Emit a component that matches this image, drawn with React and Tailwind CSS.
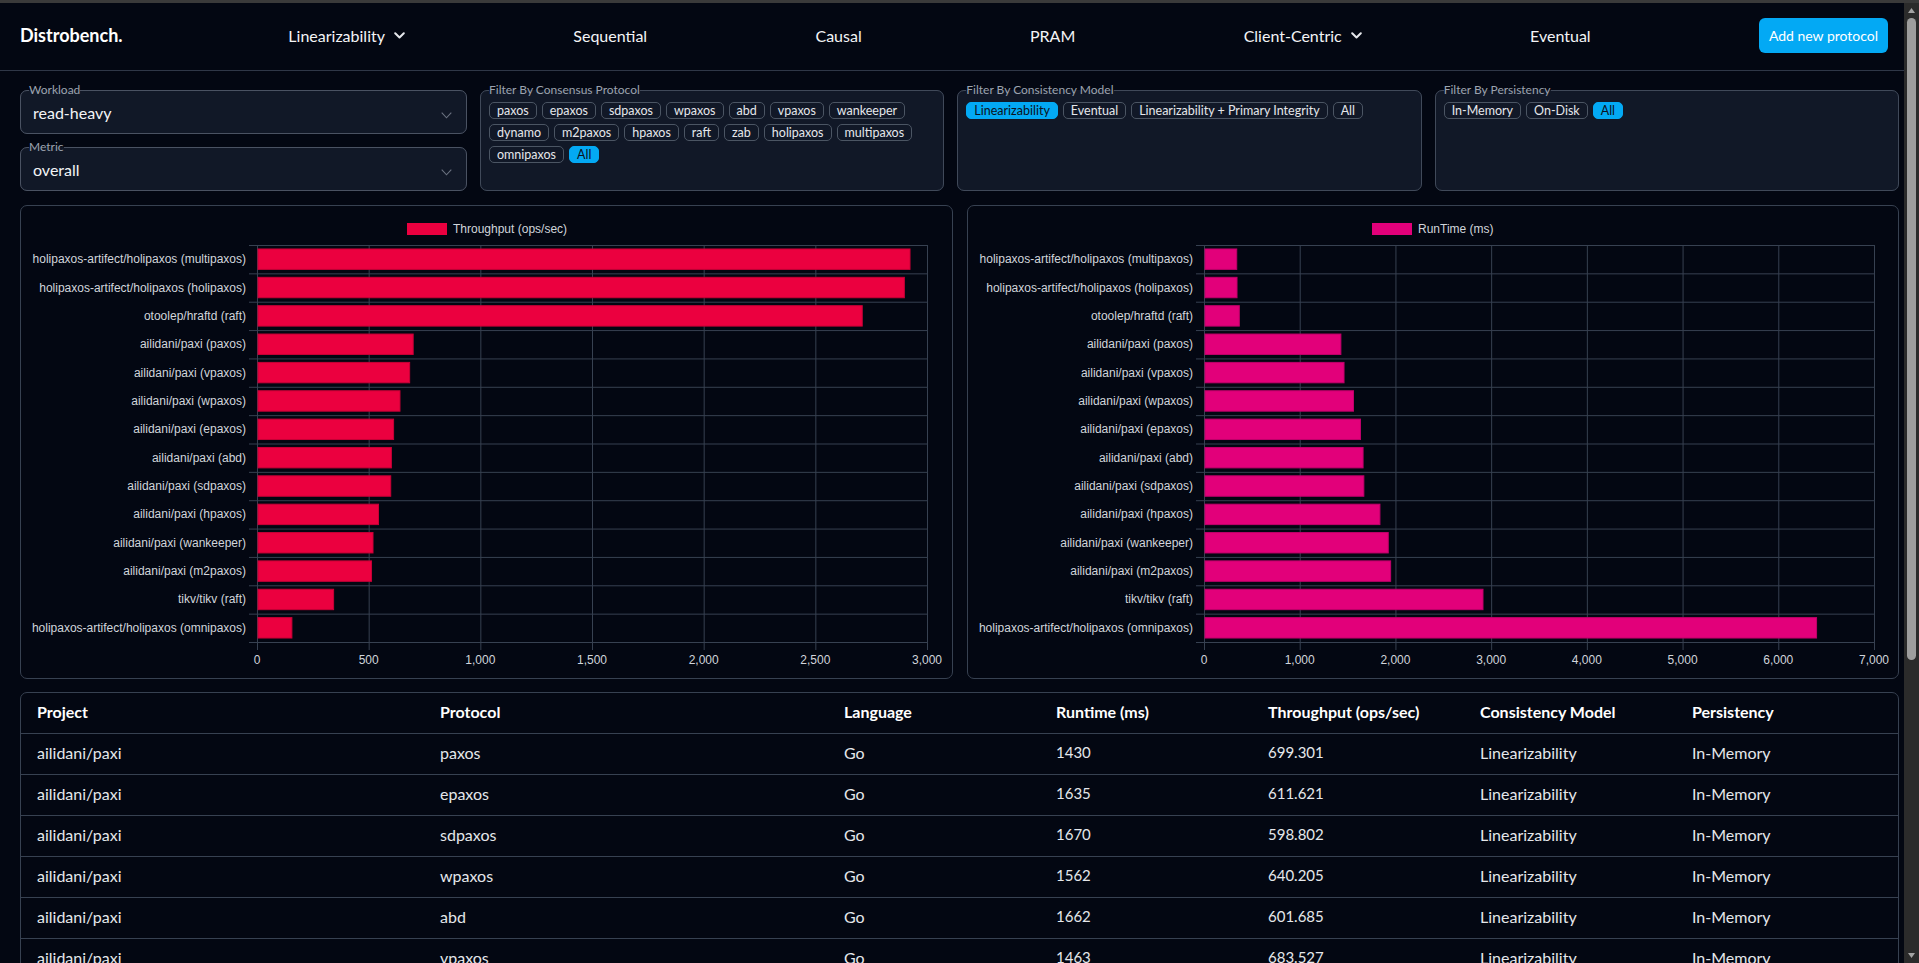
import React from "react";

const FONT = { fontFamily: "Lato, 'Open Sans', sans-serif" };

const rows = [
  ["holipaxos-artifect/holipaxos (multipaxos)", 342],
  ["holipaxos-artifect/holipaxos (holipaxos)", 345],
  ["otoolep/hraftd (raft)", 369],
  ["ailidani/paxi (paxos)", 1430],
  ["ailidani/paxi (vpaxos)", 1463],
  ["ailidani/paxi (wpaxos)", 1562],
  ["ailidani/paxi (epaxos)", 1635],
  ["ailidani/paxi (abd)", 1662],
  ["ailidani/paxi (sdpaxos)", 1670],
  ["ailidani/paxi (hpaxos)", 1838],
  ["ailidani/paxi (wankeeper)", 1925],
  ["ailidani/paxi (m2paxos)", 1950],
  ["tikv/tikv (raft)", 2915],
  ["holipaxos-artifect/holipaxos (omnipaxos)", 6400],
];

const tableRows = [
  ["ailidani/paxi", "paxos", "Go", 1430, "699.301", "Linearizability", "In-Memory"],
  ["ailidani/paxi", "epaxos", "Go", 1635, "611.621", "Linearizability", "In-Memory"],
  ["ailidani/paxi", "sdpaxos", "Go", 1670, "598.802", "Linearizability", "In-Memory"],
  ["ailidani/paxi", "wpaxos", "Go", 1562, "640.205", "Linearizability", "In-Memory"],
  ["ailidani/paxi", "abd", "Go", 1662, "601.685", "Linearizability", "In-Memory"],
  ["ailidani/paxi", "vpaxos", "Go", 1463, "683.527", "Linearizability", "In-Memory"],
  ["ailidani/paxi", "hpaxos", "Go", 1838, "544.070", "Linearizability", "In-Memory"],
  ["ailidani/paxi", "wankeeper", "Go", 1925, "519.481", "Linearizability", "In-Memory"],
  ["ailidani/paxi", "m2paxos", "Go", 1950, "512.821", "Linearizability", "In-Memory"],
  ["otoolep/hraftd", "raft", "Go", 369, "2710.027", "Linearizability", "On-Disk"],
  ["tikv/tikv", "raft", "Rust", 2915, "343.053", "Linearizability", "On-Disk"],
];

function NavChevron() {
  return (
    <svg width="11" height="7" viewBox="0 0 11 7" className="ml-[9px]">
      <polyline points="1.2,1.2 5.5,5.5 9.8,1.2" fill="none" stroke="#e5e7eb" strokeWidth="2" strokeLinecap="round" strokeLinejoin="round" />
    </svg>
  );
}

function SelectBox({ label, value }) {
  return (
    <fieldset className="min-w-0 rounded-[7px] border border-[#4a5262] bg-[#111827] px-[8px]">
      <legend className="text-[12px] leading-[14px] text-[#9ca3af]">{label}</legend>
      <div className="flex h-[36px] items-center justify-between pb-[4px] pl-[4px] pr-[6px]">
        <span className="text-[16px] text-[#f3f4f6]">{value}</span>
        <svg width="11" height="7" viewBox="0 0 11 7" className="mt-[4px]">
          <polyline points="0.7,0.7 5.5,5.8 10.3,0.7" fill="none" stroke="#6b7280" strokeWidth="1.1" />
        </svg>
      </div>
    </fieldset>
  );
}

function Chip({ children, active }) {
  return (
    <span
      className={
        active
          ? "flex h-[17px] items-center rounded-[5px] border border-[#03a9f4] bg-[#03a9f4] px-[7px] text-[12.5px] leading-[15px] text-[#0b1220]"
          : "flex h-[17px] items-center rounded-[5px] border border-[#4b5563] px-[7px] text-[12.5px] leading-[15px] text-[#e5e7eb]"
      }
    >
      {children}
    </span>
  );
}

function FilterBox({ label, items, active }) {
  return (
    <fieldset className="min-w-0 rounded-[7px] border border-[#404959] bg-[#111827] px-[8px]">
      <legend className="text-[12px] leading-[14px] text-[#9ca3af]">{label}</legend>
      <div className="flex flex-wrap gap-x-[5px] gap-y-[5px] pt-[5px]">
        {items.map((it) => (
          <Chip key={it} active={it === active}>
            {it}
          </Chip>
        ))}
      </div>
    </fieldset>
  );
}

function BarChart({ values, max, step, color, stroke, legend, legendX, legendTextX }) {
  const W = 930;
  const H = 472;
  const x0 = 236;
  const x1 = 906;
  const top = 39;
  const bottom = 436;
  const rowH = (bottom - top) / values.length;
  const sx = (v) => x0 + (v / max) * (x1 - x0);
  const ticks = [];
  for (let v = 0; v <= max; v += step) ticks.push(v);
  const fontFamily = "'Liberation Sans', Arial, Helvetica, sans-serif";
  return (
    <svg width={W} height={H} className="block">
      <rect x={legendX} y={17} width={40} height={12} fill={color} />
      <text x={legendTextX} y={27} fontSize="12" fill="#d1d5db" fontFamily={fontFamily}>
        {legend}
      </text>
      {ticks.map((t) => (
        <line key={"v" + t} x1={sx(t) + 0.5} x2={sx(t) + 0.5} y1={top} y2={bottom + 8} stroke="#374151" strokeWidth="1" />
      ))}
      {values.map((_, i) => (
        <line key={"h" + i} x1={x0 - 8} x2={x1 + 0.5} y1={top + i * rowH + 0.5} y2={top + i * rowH + 0.5} stroke="#374151" strokeWidth="1" />
      ))}
      <line x1={x0 - 8} x2={x1 + 0.5} y1={bottom + 0.5} y2={bottom + 0.5} stroke="#374151" strokeWidth="1" />
      {values.map(([label, v], i) => {
        const bh = rowH * 0.72;
        const y = top + i * rowH + (rowH - bh) / 2;
        return (
          <g key={label}>
            <rect x={x0 + 1} y={y} width={sx(v) - x0 - 1} height={bh} fill={color} stroke={stroke} strokeWidth="1" />
            <text
              x={x0 - 11}
              y={top + i * rowH + rowH / 2 + 4}
              fontSize="12"
              textAnchor="end"
              fill="#d1d5db"
              fontFamily={fontFamily}
            >
              {label}
            </text>
          </g>
        );
      })}
      {ticks.map((t) => (
        <text key={"t" + t} x={sx(t)} y={458} fontSize="12" textAnchor="middle" fill="#d1d5db" fontFamily={fontFamily}>
          {t.toLocaleString("en-US")}
        </text>
      ))}
    </svg>
  );
}

function FakeScrollbar() {
  return (
    <div className="flex h-full w-[15px] shrink-0 flex-col items-center bg-[#2b2b2b]">
      <svg width="15" height="15" viewBox="0 0 15 15" className="shrink-0">
        <polygon points="7.5,5 11,10 4,10" fill="#a3a3a3" />
      </svg>
      <div className="h-[642px] w-[9px] shrink-0 rounded-full bg-[#9e9e9e]" />
      <div className="flex-1" />
      <svg width="15" height="15" viewBox="0 0 15 15" className="shrink-0">
        <polygon points="7.5,10 11,5 4,5" fill="#a3a3a3" />
      </svg>
    </div>
  );
}

export default function App() {
  const throughput = rows.map(([l, r]) => [l, 1000000 / r]);
  return (
    <div className="h-[963px] overflow-hidden bg-[#030712] text-[#e5e7eb]" style={FONT}>
      <div className="h-[3px] bg-[#3a3a3a]" />
      <div className="flex h-[960px]">
        <div className="h-full min-w-0 flex-1 overflow-hidden bg-[#030712]">
          <nav className="flex h-[68px] items-center border-b border-[#2f3747] pb-[2px] pl-5 pr-4">
            <div className="w-[100px] text-[18px] font-bold text-white">Distrobench.</div>
            <div className="flex flex-1 items-center justify-evenly text-[16px] text-[#f3f4f6]">
              <span className="flex items-center">
                Linearizability
                <NavChevron />
              </span>
              <span>Sequential</span>
              <span>Causal</span>
              <span>PRAM</span>
              <span className="flex items-center">
                Client-Centric
                <NavChevron />
              </span>
              <span>Eventual</span>
            </div>
            <button className="flex h-[35px] w-[129px] items-center justify-center rounded-[6px] bg-[#03a9f4] text-[14px] text-white">
              Add new protocol
            </button>
          </nav>

          <main className="pl-5 pr-[5px] pt-[12px]">
            <div className="grid grid-cols-[447px_1fr_1fr_1fr] gap-x-[13px]">
              <div className="flex flex-col gap-[6px]">
                <SelectBox label="Workload" value="read-heavy" />
                <SelectBox label="Metric" value="overall" />
              </div>
              <FilterBox
                label="Filter By Consensus Protocol"
                items={["paxos", "epaxos", "sdpaxos", "wpaxos", "abd", "vpaxos", "wankeeper", "dynamo", "m2paxos", "hpaxos", "raft", "zab", "holipaxos", "multipaxos", "omnipaxos", "All"]}
                active="All"
              />
              <FilterBox
                label="Filter By Consistency Model"
                items={["Linearizability", "Eventual", "Linearizability + Primary Integrity", "All"]}
                active="Linearizability"
              />
              <FilterBox label="Filter By Persistency" items={["In-Memory", "On-Disk", "All"]} active="All" />
            </div>

            <div className="mt-[14px] grid grid-cols-2 gap-[14px]">
              <div className="h-[474px] overflow-hidden rounded-[7px] border border-[#374151]">
                <BarChart
                  values={throughput}
                  max={3000}
                  step={500}
                  color="#eb003f"
                  stroke="#c80036"
                  legend="Throughput (ops/sec)"
                  legendX={386}
                  legendTextX={432}
                />
              </div>
              <div className="h-[474px] overflow-hidden rounded-[7px] border border-[#374151]">
                <BarChart
                  values={rows}
                  max={7000}
                  step={1000}
                  color="#e2007a"
                  stroke="#c0006a"
                  legend="RunTime (ms)"
                  legendX={404}
                  legendTextX={450}
                />
              </div>
            </div>

            <div className="mt-[13px] rounded-t-[7px] border border-[#374151]">
              <table className="w-full table-fixed border-collapse text-left">
                <colgroup>
                  <col className="w-[403px]" />
                  <col className="w-[404px]" />
                  <col className="w-[212px]" />
                  <col className="w-[212px]" />
                  <col className="w-[212px]" />
                  <col className="w-[212px]" />
                  <col />
                </colgroup>
                <thead>
                  <tr className="h-[40px] border-b border-[#374151] text-[16px] font-bold text-white">
                    <th className="pb-[2px] pl-[16px] font-bold">Project</th>
                    <th className="pb-[2px] pl-[16px] font-bold">Protocol</th>
                    <th className="pb-[2px] pl-[16px] font-bold">Language</th>
                    <th className="pb-[2px] pl-[16px] font-bold">Runtime (ms)</th>
                    <th className="pb-[2px] pl-[16px] font-bold">Throughput (ops/sec)</th>
                    <th className="pb-[2px] pl-[16px] font-bold">Consistency Model</th>
                    <th className="pb-[2px] pl-[16px] font-bold">Persistency</th>
                  </tr>
                </thead>
                <tbody>
                  {tableRows.map((r, i) => (
                    <tr key={i} className="h-[41px] border-b border-[#374151] text-[16px] text-[#e5e7eb]">
                      {r.map((c, j) => (
                        <td key={j} className={j >= 3 && j <= 4 ? "pb-[2px] pl-[16px] text-[15px]" : "pb-[2px] pl-[16px]"}>
                          {c}
                        </td>
                      ))}
                    </tr>
                  ))}
                </tbody>
              </table>
            </div>
          </main>
        </div>
        <FakeScrollbar />
      </div>
    </div>
  );
}
